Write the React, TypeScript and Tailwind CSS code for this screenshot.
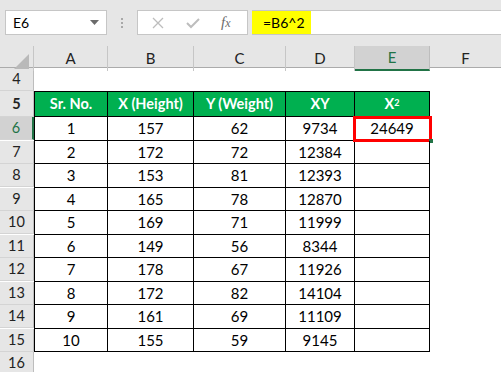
import React from "react";

const rows = [
  [1, 157, 62, 9734, 24649],
  [2, 172, 72, 12384, null],
  [3, 153, 81, 12393, null],
  [4, 165, 78, 12870, null],
  [5, 169, 71, 11999, null],
  [6, 149, 56, 8344, null],
  [7, 178, 67, 11926, null],
  [8, 172, 82, 14104, null],
  [9, 161, 69, 11109, null],
  [10, 155, 59, 9145, null],
];

const grid = "grid grid-cols-[34px_74px_86px_92px_69px_75px_1fr]";

function RowHead({ n, active = false, tall = false }: { n: number; active?: boolean; tall?: boolean }) {
  return (
    <div
      className={
        "flex items-center justify-center border-b border-[#d4d4d4] text-[14.5px] " +
        (active
          ? "bg-[#d2d2d2] text-[#217346] border-r-2 border-r-[#217346]"
          : "bg-[#e6e6e6] text-[#222] border-r border-r-[#bdbdbd]") +
        (tall ? " h-[26px]" : " h-[23px]")
      }
    >
      {n}
    </div>
  );
}

export default function App() {
  return (
    <div className="w-[501px] h-[372px] overflow-hidden bg-white font-['Lato',sans-serif] text-black">
      {/* Name box + formula bar */}
      <div className="h-[46px] bg-[#e6e6e6] flex items-start pt-[10px] pl-[5px]">
        <div className="w-[102px] h-[25px] bg-white border border-[#c6c6c6] flex items-center justify-between pl-[7px] pr-[7px] text-[14px]">
          <span>E6</span>
          <svg width="9" height="5" viewBox="0 0 9 5">
            <path d="M0 0 L9 0 L4.5 5 Z" fill="#6b6b6b" />
          </svg>
        </div>
        <div className="w-[30px] h-[25px] flex flex-col items-center justify-center gap-[2px]">
          <span className="w-[2px] h-[2px] bg-[#a8a8a8]" />
          <span className="w-[2px] h-[2px] bg-[#a8a8a8]" />
          <span className="w-[2px] h-[2px] bg-[#a8a8a8]" />
        </div>
        <div className="w-[111px] h-[25px] bg-white border border-[#c6c6c6] flex items-center">
          <svg className="ml-[14px]" width="12" height="12" viewBox="0 0 12 12">
            <path d="M1 1 L11 11 M11 1 L1 11" stroke="#bdbdbd" strokeWidth="1.3" fill="none" />
          </svg>
          <svg className="ml-[22px]" width="14" height="12" viewBox="0 0 14 12">
            <path d="M1 6 L5 10 L13 2" stroke="#bdbdbd" strokeWidth="2" fill="none" />
          </svg>
          <span className="ml-[21px] font-['Liberation_Serif',serif] italic text-[15px] text-[#6b6b6b] leading-none">
            f<span className="text-[12px]">x</span>
          </span>
        </div>
        <div className="flex-1 ml-[4px] h-[25px] bg-white border-y border-[#c6c6c6] flex">
          <div className="w-[59px] h-full bg-[#ffff00] flex items-center pl-[11px] text-[14px]">=B6^2</div>
        </div>
      </div>

      {/* Column headers */}
      <div className={grid + " h-[22px] bg-[#e6e6e6] border-b border-[#ababab] text-[15px]"}>
        <div className="relative border-r border-[#c6c6c6]">
          <svg className="absolute right-[4px] bottom-[2px]" width="15" height="15" viewBox="0 0 15 15">
            <path d="M15 0 L15 15 L0 15 Z" fill="#b9b9b9" />
          </svg>
        </div>
        {["A", "B", "C", "D"].map((c) => (
          <div key={c} className="flex items-center justify-center border-r border-[#c6c6c6] text-[#222]">
            {c}
          </div>
        ))}
        <div className="flex items-center justify-center bg-[#d2d2d2] text-[#217346] border-r border-[#bdbdbd] border-b-2 border-b-[#217346]">
          E
        </div>
        <div className="flex items-center justify-center text-[#222]">F</div>
      </div>

      {/* Row 4 */}
      <div className={grid}>
        <RowHead n={4} />
        <div className="col-span-6" />
      </div>

      {/* Row 5: table header */}
      <div className={grid + " text-[14.5px] font-bold text-white"}>
        <RowHead n={5} tall />
        <div className="flex items-center justify-center bg-[#00b050] border border-black">Sr. No.</div>
        <div className="flex items-center justify-center bg-[#00b050] border-y border-r border-black">X (Height)</div>
        <div className="flex items-center justify-center bg-[#00b050] border-y border-r border-black">Y (Weight)</div>
        <div className="flex items-center justify-center bg-[#00b050] border-y border-r border-black">XY</div>
        <div className="flex items-center justify-center bg-[#00b050] border-y border-r border-black">
          <span>
            X<sup className="text-[9px] relative -top-[3px]">2</sup>
          </span>
        </div>
        <div />
      </div>

      {/* Data rows */}
      {rows.map((r, i) => (
        <div key={i} className={grid + " text-[15px]"}>
          <RowHead n={6 + i} active={i === 0} />
          <div className="flex items-center justify-center border-x border-b border-black">{r[0]}</div>
          <div className="flex items-center justify-center border-r border-b border-black">{r[1]}</div>
          <div className="flex items-center justify-center border-r border-b border-black">{r[2]}</div>
          <div className="flex items-center justify-center border-r border-b border-black">{r[3]}</div>
          <div className="relative flex items-center justify-center border-r border-b border-black">
            {r[4]}
            {i === 0 && (
              <>
                <div className="absolute -left-[2px] -top-[1px] -right-[3px] -bottom-[2px] border-[3px] border-[#ff0000]" />
                <div className="absolute -right-[4px] -bottom-[3px] w-[4px] h-[4px] bg-[#217346]" />
              </>
            )}
          </div>
          <div />
        </div>
      ))}

      {/* Row 16 */}
      <div className={grid}>
        <RowHead n={16} />
        <div className="col-span-6" />
      </div>
    </div>
  );
}
